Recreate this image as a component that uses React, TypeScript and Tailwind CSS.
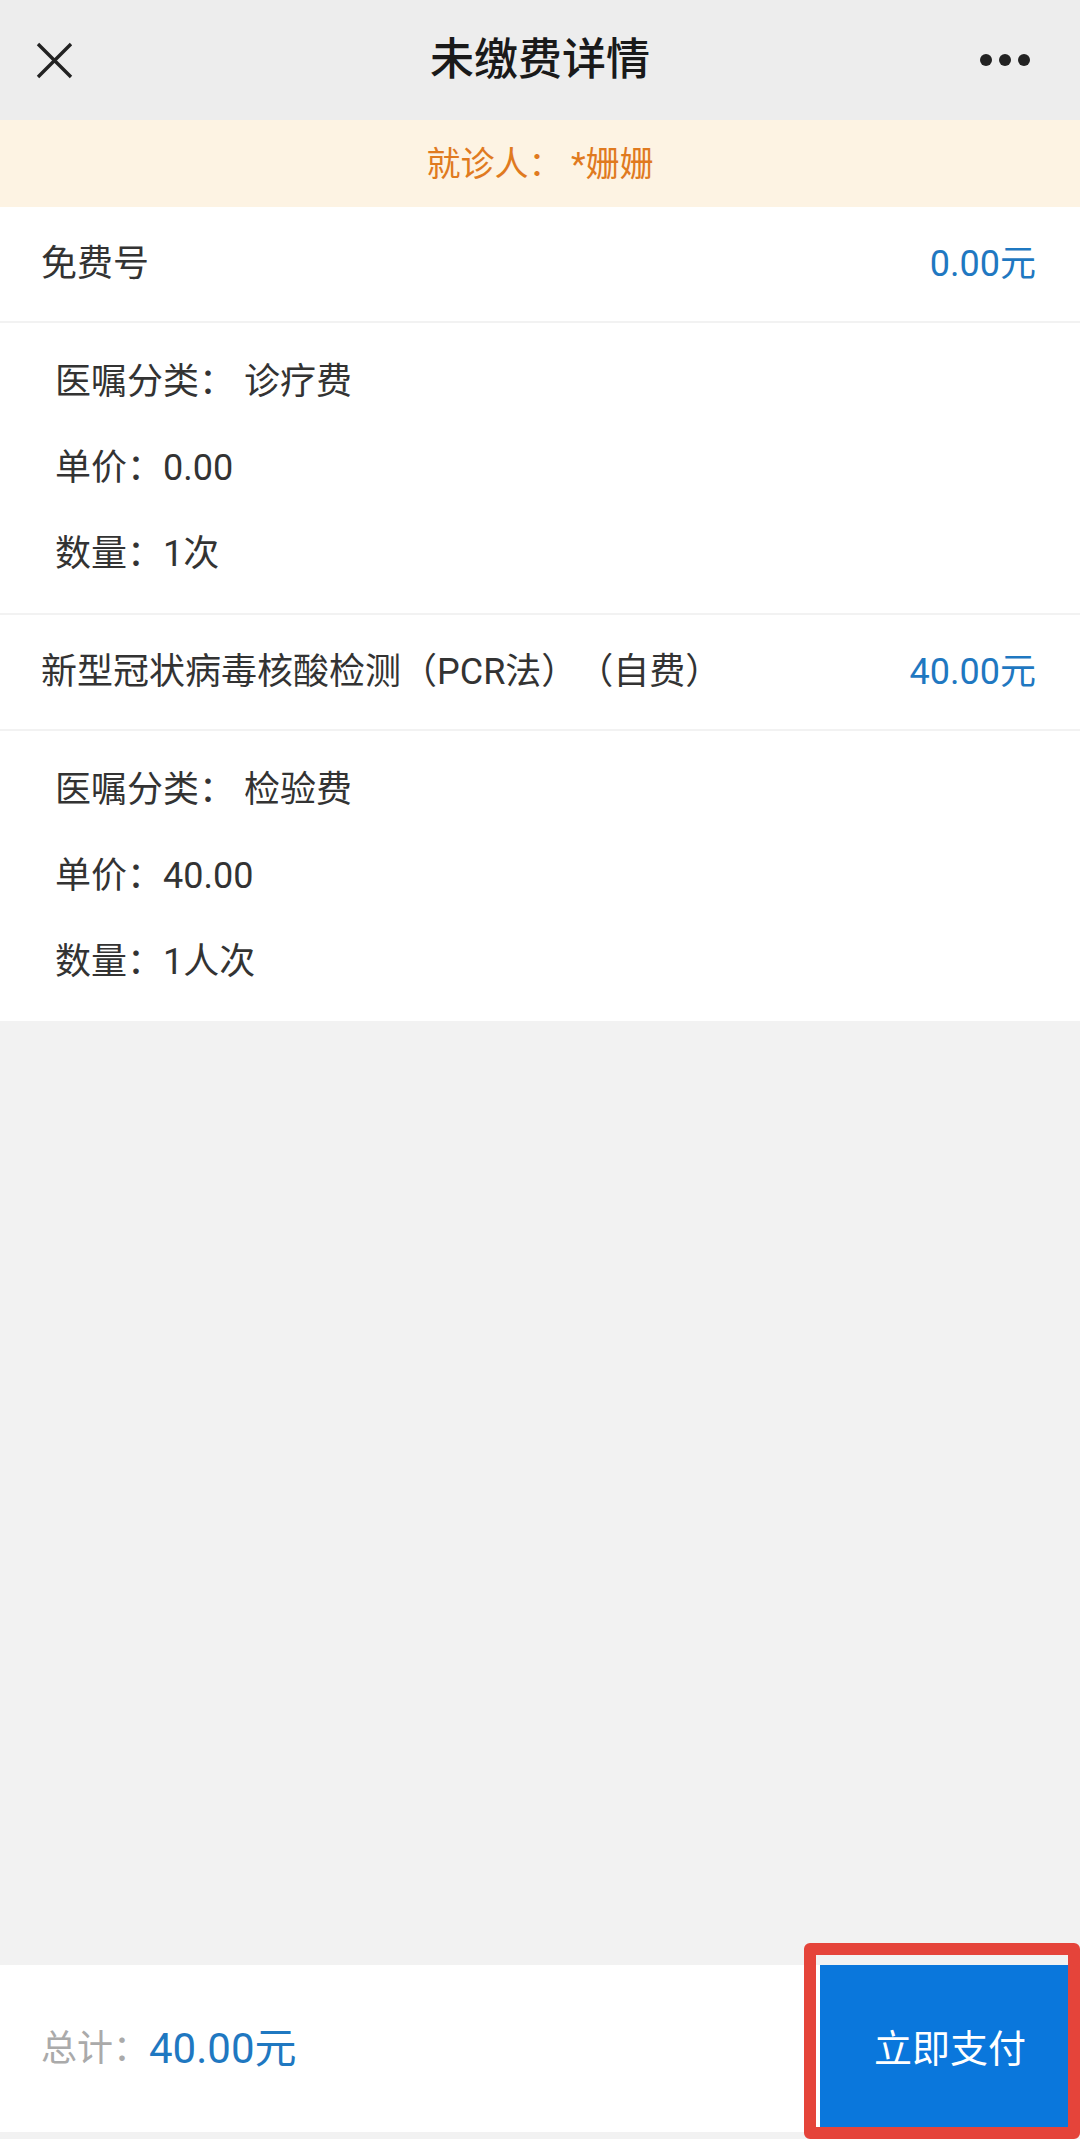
import React from "react";

const font = "font-['Roboto','Noto_Sans_CJK_SC',sans-serif]";

interface FeeItem {
    name: string;
    amount: string;
    category: string;
    price: string;
    qty: string;
}

const items: FeeItem[] = [
    { name: "免费号", amount: "0.00元", category: "诊疗费", price: "0.00", qty: "1次" },
    {
        name: "新型冠状病毒核酸检测（PCR法）（自费）",
        amount: "40.00元",
        category: "检验费",
        price: "40.00",
        qty: "1人次",
    },
];

function FeeBlock({ item }: { item: FeeItem }) {
    return (
        <div className="bg-white">
            <div className="h-[116px] pl-[41px] pr-[44px] flex items-center justify-between border-b-2 border-[#f2f2f2]">
                <span className="text-[36px] leading-none text-[#333]">{item.name}</span>
                <span className="text-[36px] leading-none text-[#1f78c1]">{item.amount}</span>
            </div>
            <div className="py-[16px] px-[55px] border-b-2 border-[#f2f2f2] text-[36px] leading-none text-[#333]">
                <div className="h-[86px] flex items-center">医嘱分类：&nbsp;{item.category}</div>
                <div className="h-[86px] flex items-center">单价：{item.price}</div>
                <div className="h-[86px] flex items-center">数量：{item.qty}</div>
            </div>
        </div>
    );
}

export default function App() {
    return (
        <div className={`relative w-[1080px] h-[2139px] flex flex-col bg-[#f2f2f2] [text-spacing-trim:space-all] ${font}`}>
            {/* top bar */}
            <div className="h-[120px] shrink-0 bg-[#ededed] grid grid-cols-[200px_1fr_200px] items-center">
                <div className="pl-[36px] flex items-center">
                    <svg width="37" height="37" viewBox="0 0 37 37" fill="none">
                        <path d="M2 2L35 35M35 2L2 35" stroke="#222" strokeWidth="3.4" />
                    </svg>
                </div>
                <div className="text-center text-[44px] leading-none font-medium text-[#1a1a1a]">未缴费详情</div>
                <div className="pr-[50px] flex justify-end items-center gap-[7px]">
                    <span className="w-[12px] h-[12px] rounded-full bg-[#222]" />
                    <span className="w-[12px] h-[12px] rounded-full bg-[#222]" />
                    <span className="w-[12px] h-[12px] rounded-full bg-[#222]" />
                </div>
            </div>

            {/* patient banner */}
            <div className="h-[87px] shrink-0 bg-[#fdf3e3] flex items-center justify-center">
                <span className="text-[34px] leading-none text-[#e07a1f]">就诊人：&nbsp;*姗姗</span>
            </div>

            {items.map((item) => (
                <FeeBlock key={item.name} item={item} />
            ))}

            <div className="flex-1" />

            {/* footer */}
            <div className="h-[167px] shrink-0 mb-[7px] bg-white flex items-center">
                <div className="flex-1 pl-[41px] flex items-center">
                    <span className="text-[36px] leading-none text-[#aaa]">总计：</span>
                    <span className="text-[42px] leading-none text-[#1f78c1]">40.00元</span>
                </div>
                <button className="w-[260px] h-full bg-[#0a77dc] text-white text-[38px] leading-none flex items-center justify-center">
                    立即支付
                </button>
            </div>

            {/* red annotation frame */}
            <div className="absolute right-0 bottom-0 w-[276px] h-[196px] border-[12px] border-[#e5443a] rounded-[6px]" />
        </div>
    );
}
